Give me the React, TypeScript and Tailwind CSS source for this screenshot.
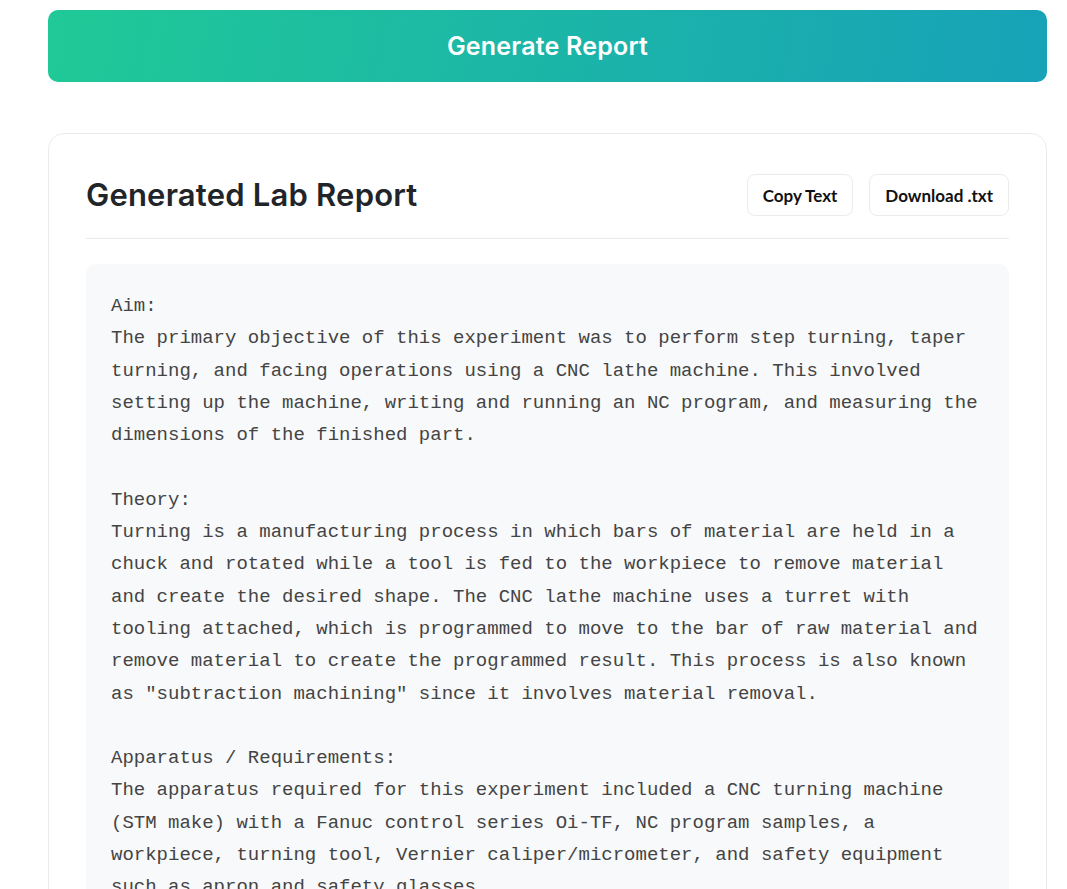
import React from 'react'

const REPORT = `Aim:
The primary objective of this experiment was to perform step turning, taper turning, and facing operations using a CNC lathe machine. This involved setting up the machine, writing and running an NC program, and measuring the dimensions of the finished part.

Theory:
Turning is a manufacturing process in which bars of material are held in a chuck and rotated while a tool is fed to the workpiece to remove material and create the desired shape. The CNC lathe machine uses a turret with tooling attached, which is programmed to move to the bar of raw material and remove material to create the programmed result. This process is also known as "subtraction machining" since it involves material removal.

Apparatus / Requirements:
The apparatus required for this experiment included a CNC turning machine (STM make) with a Fanuc control series Oi-TF, NC program samples, a workpiece, turning tool, Vernier caliper/micrometer, and safety equipment such as apron and safety glasses.

Procedure:
1. The workpiece was clamped securely in the chuck of the CNC lathe.
2. The turning tool was mounted in the turret and the tool offsets were set.
3. The NC program was entered and verified in simulation mode.
4. The program was executed and the finished part was measured.`

export default function App() {
  return (
    <div className="min-h-screen bg-white pl-[48px] pr-[20px] pt-[10px] pb-10">
      <button className="w-full h-[72px] rounded-[10px] bg-[linear-gradient(100deg,#20c997,#17a2b8)] text-white text-[25px] leading-none font-semibold font-['Inter',sans-serif] tracking-[0.2px]">
        Generate Report
      </button>

      <div className="mt-[51px] rounded-[16px] border border-[#e9ecef] bg-white px-[37px] pt-[40px] pb-[40px]">
        {/* Header */}
        <div className="flex items-center justify-between border-b border-[#e9ecef] pb-[22px]">
          <h2 className="text-[31px] leading-tight font-semibold text-[#212529] font-['Inter',sans-serif] tracking-[0.2px]">
            Generated Lab Report
          </h2>
          <div className="flex gap-4">
            <button className="h-[42px] px-[15px] rounded-[8px] border border-[#e9ecef] bg-white text-[17px] leading-none font-bold text-[#111] font-['Lato',sans-serif]">
              Copy Text
            </button>
            <button className="h-[42px] px-[15px] rounded-[8px] border border-[#e9ecef] bg-white text-[17px] leading-none font-bold text-[#111] font-['Lato',sans-serif]">
              Download .txt
            </button>
          </div>
        </div>

        {/* Report body */}
        <pre className="mt-[25px] rounded-[10px] bg-[#f8f9fa] pt-[26px] pb-6 px-[25px] whitespace-pre-wrap text-[19px] leading-[1.7] text-[#444] font-['Liberation_Mono','Courier_New',monospace]">
          {REPORT}
        </pre>
      </div>
    </div>
  )
}
